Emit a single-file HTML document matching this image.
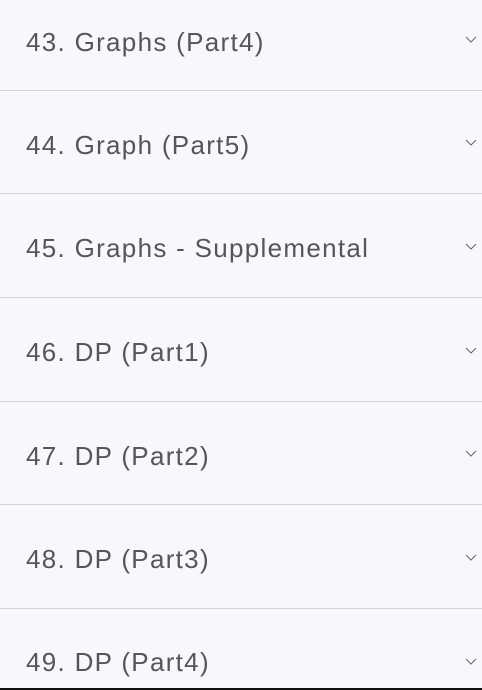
<!DOCTYPE html>
<html><head><style>
html,body{margin:0;padding:0;width:482px;height:690px;overflow:hidden;background:#f8f8fc;font-family:"Liberation Sans",sans-serif;}
.t{position:absolute;left:26px;font-size:26px;letter-spacing:1.3px;color:#55555a;line-height:30px;white-space:nowrap;}
.l{position:absolute;left:0;width:482px;height:1px;background:#d2d2d2;}
svg{position:absolute;left:465px;}
</style></head><body>
<div class="t" style="top:27px">43. Graphs (Part4)</div>
<svg style="top:36px" width="12" height="8"><path d="M1 1L6 6L11 1" fill="none" stroke="#666" stroke-width="1"/></svg>
<div class="l" style="top:90px"></div>
<div class="t" style="top:130px">44. Graph (Part5)</div>
<svg style="top:139px" width="12" height="8"><path d="M1 1L6 6L11 1" fill="none" stroke="#666" stroke-width="1"/></svg>
<div class="l" style="top:193px"></div>
<div class="t" style="top:233px">45. Graphs - Supplemental</div>
<svg style="top:243px" width="12" height="8"><path d="M1 1L6 6L11 1" fill="none" stroke="#666" stroke-width="1"/></svg>
<div class="l" style="top:297px"></div>
<div class="t" style="top:337px">46. DP (Part1)</div>
<svg style="top:347px" width="12" height="8"><path d="M1 1L6 6L11 1" fill="none" stroke="#666" stroke-width="1"/></svg>
<div class="l" style="top:401px"></div>
<div class="t" style="top:441px">47. DP (Part2)</div>
<svg style="top:450px" width="12" height="8"><path d="M1 1L6 6L11 1" fill="none" stroke="#666" stroke-width="1"/></svg>
<div class="l" style="top:504px"></div>
<div class="t" style="top:544px">48. DP (Part3)</div>
<svg style="top:554px" width="12" height="8"><path d="M1 1L6 6L11 1" fill="none" stroke="#666" stroke-width="1"/></svg>
<div class="l" style="top:608px"></div>
<div class="t" style="top:647px">49. DP (Part4)</div>
<svg style="top:658px" width="12" height="8"><path d="M1 1L6 6L11 1" fill="none" stroke="#666" stroke-width="1"/></svg>
<div style="position:absolute;left:0;top:688px;width:482px;height:2px;background:#111"></div>
</body></html>
